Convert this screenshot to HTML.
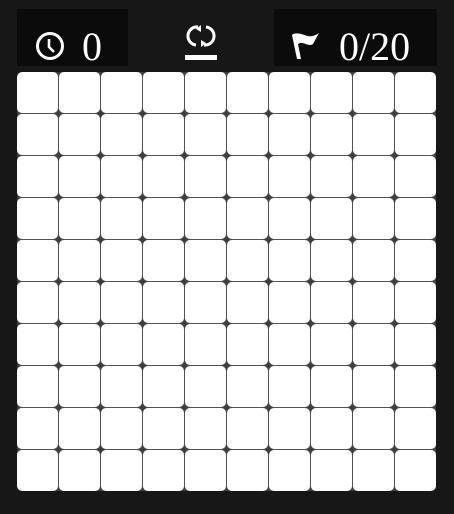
<!DOCTYPE html>
<html><head><style>
body{margin:0;width:454px;height:514px;background:#171717;overflow:hidden;font-family:"Liberation Serif",serif;}
.box{position:absolute;top:9px;height:57px;background:#0b0b0b;color:#fff;}
.num{position:absolute;top:16px;font-size:40px;line-height:44px;}
.grid{position:absolute;left:17px;top:72px;width:419px;height:419px;background:#3e3e3e;display:grid;grid-template-columns:repeat(10,41px);grid-template-rows:repeat(10,41px);gap:1px;border-radius:5px;overflow:hidden;}
.grid div{background:#fff;border-radius:5px;box-shadow:0 0 1px #888;}
</style></head><body>
<div class="box" style="left:17px;width:111px;">
<svg style="position:absolute;left:18px;top:22px" width="30" height="30" viewBox="0 0 30 30"><circle cx="15" cy="15" r="12.5" fill="none" stroke="#fff" stroke-width="3"/><path d="M14 8v8l5 5" fill="none" stroke="#fff" stroke-width="2.6"/></svg>
<div class="num" style="left:65px;">0</div>
</div>
<svg style="position:absolute;left:184px;top:20px" width="34" height="42" viewBox="0 0 34 42"><path d="M14 7 A9 9 0 0 0 12 25" fill="none" stroke="#fff" stroke-width="3"/><path d="M17 5l-5 4 5 3z" fill="#fff"/><path d="M20 25 A9 9 0 0 0 22 7" fill="none" stroke="#fff" stroke-width="3"/><path d="M17 27l5-4-5-3z" fill="#fff"/><rect x="1" y="35" width="32" height="5" fill="#fff"/></svg>
<div class="box" style="left:274px;width:163px;">
<svg style="position:absolute;left:17px;top:23px" width="30" height="28" viewBox="0 0 30 28"><path d="M2 2 C8 0 12 3 17 4 C21 5 25 3 28 1 L22 12 C18 15 13 10 9 11 L7 12 L10 27 L6 27 L1 3z" fill="#fff"/></svg>
<div class="num" style="left:65px;">0/20</div>
</div>
<div class="grid">
<div></div><div></div><div></div><div></div><div></div><div></div><div></div><div></div><div></div><div></div>
<div></div><div></div><div></div><div></div><div></div><div></div><div></div><div></div><div></div><div></div>
<div></div><div></div><div></div><div></div><div></div><div></div><div></div><div></div><div></div><div></div>
<div></div><div></div><div></div><div></div><div></div><div></div><div></div><div></div><div></div><div></div>
<div></div><div></div><div></div><div></div><div></div><div></div><div></div><div></div><div></div><div></div>
<div></div><div></div><div></div><div></div><div></div><div></div><div></div><div></div><div></div><div></div>
<div></div><div></div><div></div><div></div><div></div><div></div><div></div><div></div><div></div><div></div>
<div></div><div></div><div></div><div></div><div></div><div></div><div></div><div></div><div></div><div></div>
<div></div><div></div><div></div><div></div><div></div><div></div><div></div><div></div><div></div><div></div>
<div></div><div></div><div></div><div></div><div></div><div></div><div></div><div></div><div></div><div></div>
</div>
</body></html>
